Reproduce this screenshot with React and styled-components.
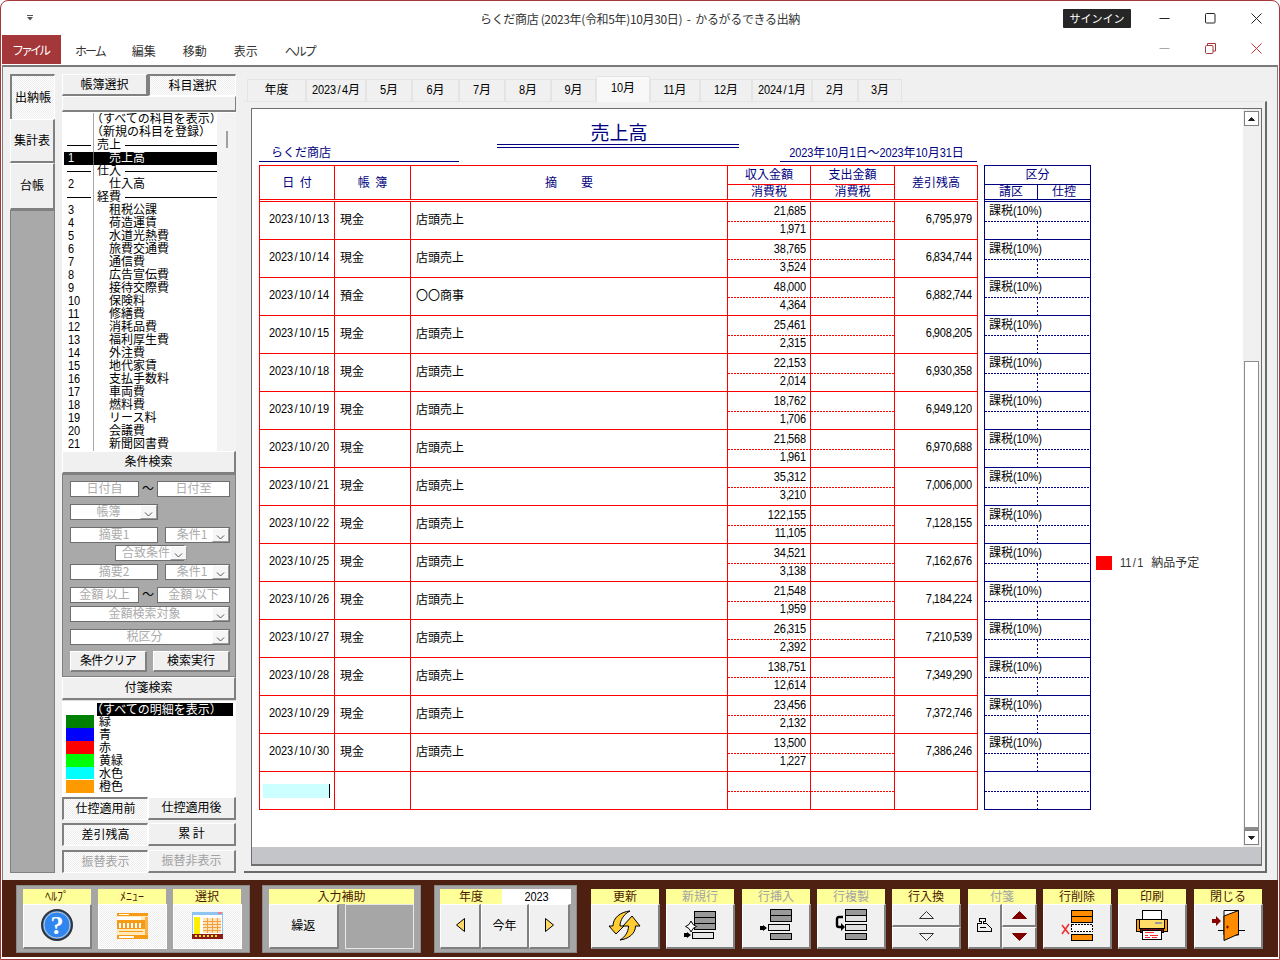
import React from "react";
import styled, { createGlobalStyle, css } from "styled-components";

const JP = '"Noto Sans CJK JP", "Liberation Sans", sans-serif';
const RED = "#ff0000";
const NAVY = "#000080";
const GREY = "#808080";

const Global = createGlobalStyle`
  html, body { margin: 0; padding: 0; background: #fff; }
  body { font: 12px/14px ${JP}; color: #000; }
  * { box-sizing: border-box; }
`;

const raised = css`
  background: #f0f0f0;
  border-style: solid;
  border-width: 1px 2px 2px 1px;
  border-color: #fff ${GREY} ${GREY} #fff;
`;
const sunken = css`
  background: repeating-conic-gradient(#fff 0 25%, #ececec 0 50%) 0 0 / 2px 2px;
  border-style: solid;
  border-width: 2px 1px 1px 2px;
  border-color: ${GREY} #fff #fff ${GREY};
`;

const Window = styled.div`
  width: 1280px; height: 960px; border: 1px solid #a4373a; border-radius: 8px 8px 0 0;
  padding: 0 1px 2px; display: flex; flex-direction: column; overflow: hidden; background: #fff;
`;
const TitleBar = styled.div`
  height: 34px; display: grid; grid-template-columns: 1fr auto 1fr; align-items: center; color: #333;
`;
const QuickMenu = styled.div`padding-left: 25px; display: flex; align-items: center;`;
const TitleText = styled.div`white-space: pre; padding-top: 2px; letter-spacing: -0.35px;`;
const WinControls = styled.div`display: flex; justify-content: flex-end; align-items: center; gap: 1px; margin-right: -1px;`;
const SignIn = styled.div`
  width: 68px; height: 19px; margin-right: 10px; background: #262626; color: #fff; font-size: 11px;
  display: flex; align-items: center; justify-content: center; border-radius: 1px;
`;
const CtlBox = styled.div`width: 45px; height: 20px; display: flex; align-items: center; justify-content: center;`;
const MenuBar = styled.div`height: 30px; display: flex; align-items: stretch;`;
const FileTab = styled.div`
  width: 59px; height: 29px; background: #a4373a; color: #fff; display: flex; align-items: center;
  justify-content: center; letter-spacing: -3px; padding-right: 3px;
`;
const MenuItems = styled.div`display: flex; gap: 27px; margin-left: 14px; padding-top: 9px; color: #333; flex: 1;`;
const MenuItem = styled.div`letter-spacing: ${p => p.$tight ? "-2px" : "0"};`;
const MenuCtl = styled.div`display: flex; gap: 1px; padding-bottom: 4px; align-items: center; margin-right: -1px;`;

const Body = styled.div`
  height: 815px; border-top: 2px solid #7a7a7a; border-left: 1px solid ${GREY}; border-right: 1px solid ${GREY};
  background: #f0f0f0; padding: 7px 0 7px 7px; display: grid;
  grid-template-columns: 45px 174px 1023px; column-gap: 7px;
`;
const SideTabs = styled.div`display: flex; flex-direction: column;`;
const SideTab = styled.div`
  height: ${p => p.$h}px; display: flex; align-items: center; justify-content: center; padding-bottom: 2px;
  ${p => p.$on ? sunken : raised}
  border-bottom-width: ${p => p.$on ? 0 : 2}px;
`;
const SideFill = styled.div`flex: 1; background: #a9a9a9; border: 1px solid ${GREY};`;

const Column = styled.div`display: flex; flex-direction: column; width: 174px;`;
const TwoBtns = styled.div`
  display: grid; grid-template-columns: 86px 88px; height: ${p => p.$h || 23}px;
  margin-top: ${p => p.$top || 0}px;
`;
const Btn = styled.div`
  display: flex; align-items: center; justify-content: center; padding-bottom: 2px;
  color: ${p => p.$off ? "#a0a0a0" : "#000"};
  letter-spacing: ${p => p.$tight ? "-0.8px" : "0"};
  ${p => p.$on ? sunken : raised}
`;
const EmptyBar = styled.div`height: 16px; ${raised} border-width: 1px 1px 2px 1px;`;
const ListBox = styled.div`
  height: 339px; background: #f3f3f3; display: flex; overflow: hidden;
  border-top: 1px solid #fff; border-left: 2px solid #fff;
`;
const ListInner = styled.div`width: 153px; background: #fff; height: 100%; overflow: hidden;`;
const ListRow = styled.div`
  height: 13px; display: grid; grid-template-columns: 29px 1px 1fr; align-items: center; line-height: 13px;
  white-space: nowrap;
  background: ${p => p.$sel ? "#000" : "transparent"}; color: ${p => p.$sel ? "#fff" : "#000"};
`;
const ListNo = styled.div`padding: 0 0 ${p => p.$digit ? 2 : 0}px 4px; display: flex; align-items: center;`;
const ListBar = styled.div`height: 13px; background: ${p => p.$sel ? "#666" : "#a8a8a8"};`;
const ListName = styled.div`
  padding-left: ${p => p.$indent ? 15 : 3}px; align-self: start; margin-top: -2px;
`;
const SecName = styled.div`display: flex; align-items: center; padding-left: 3px; gap: 4px;`;
const SecText = styled.span`margin-top: -4px;`;
const Rule = styled.div`flex: 1; height: 1px; background: #000; margin: ${p => p.$m || 0};`;
const ListTrack = styled.div`flex: 1; display: flex; justify-content: center; padding-top: 18px;`;
const ListThumb = styled.div`width: 2px; height: 17px; background: #a0a0a0;`;
const Halt = styled.span`font-feature-settings: "halt";`;
const SectionHead = styled.div`height: 23px; ${raised} display: flex; align-items: center; justify-content: center; padding-bottom: 2px;`;

const SearchPanel = styled.div`
  height: 203px; background: #a9a9a9; border: 1px solid ${GREY}; padding: 6px 0 0 7px;
  display: flex; flex-direction: column;
`;
const SearchRow = styled.div`
  display: flex; align-items: center; height: ${p => p.$h || 16}px; margin-top: ${p => p.$top || 0}px;
  margin-left: ${p => p.$left || 0}px; gap: ${p => p.$gap || 0}px;
`;
const Field = styled.div`
  width: ${p => p.$w}px; height: 16px; background: #fff; border: 1px solid #6e6e6e; color: #ababab;
  display: flex; align-items: center; justify-content: ${p => p.$right ? "space-between" : "center"};
  padding-left: ${p => p.$right ? 6 : 0}px; padding-bottom: ${p => p.$right ? 0 : 2}px; line-height: 12px; white-space: pre; flex: none;
`;
const FieldText = styled.span`flex: 1; text-align: center; margin-top: -2px;`;
const Drop = styled.div`
  width: 17px; height: 14px; background: #f6f6f6; border: 1px solid; border-color: #fff #9a9a9a #9a9a9a #fff; display: flex;
  align-items: flex-end; justify-content: center; padding-bottom: 1px; flex: none;
`;
const Tilde = styled.div`width: 18px; text-align: center; flex: none; margin-top: -2px;`;
const SearchBtn = styled(Btn)`width: 77px; height: 21px;`;

const StickyBox = styled.div`
  height: 97px; background: #fff; border-top: 1px solid #ddd; padding: 2px 3px 0 4px;
  display: grid; grid-template-columns: 28px 1fr; column-gap: 3px; grid-auto-rows: 13px;
`;
const Swatch = styled.div`background: ${p => p.$c}; margin: -1px 0 ${p => p.$gap ? 2 : 1}px;`;
const StickyName = styled.div`
  line-height: 13px; padding-left: ${p => p.$sel ? 0 : 2}px; white-space: nowrap;
  margin-top: ${p => p.$sel ? 0 : -2}px; height: 13px;
  background: ${p => p.$sel ? "#000" : "transparent"}; color: ${p => p.$sel ? "#fff" : "#000"};
`;
const StickyText = styled.span`display: block; margin-top: -1px;`;

const Main = styled.div`display: flex; flex-direction: column; padding-top: 1px; width: 1023px; margin-left: 1px;`;
const TabStrip = styled.div`display: flex; align-items: flex-end; height: 26px; padding-left: 3px;`;
const YearTab = styled.div`
  width: ${p => p.$w}px; height: ${p => p.$on ? 26 : 22}px; margin-bottom: ${p => p.$on ? -1 : 0}px;
  background: ${p => p.$on ? "#f8f8f8" : "#f0f0f0"}; border: 1px solid #e4e4e4;
  border-bottom-width: 0; display: flex; align-items: center; justify-content: center; z-index: 1;
  padding-bottom: ${p => p.$on ? 6 : 4}px;
`;
const Panel = styled.div`
  flex: 1; border-top: 1px solid #e6e6e6; border-right: 2px solid #6a6a6a; border-bottom: 2px solid #6a6a6a;
  padding: 6px 3px 5px 7px; display: flex;
`;
const Inner = styled.div`
  flex: 1; border: 1px solid #6e6e6e; border-width: 1px 1px 2px 1px; display: flex; flex-direction: column; background: #fff;
`;
const InnerTop = styled.div`flex: 1; display: flex; min-height: 0;`;
const GreyStrip = styled.div`height: 17px; background: #c4c5c9;`;
const Sheet = styled.div`flex: 1; padding-left: 7px; min-width: 0;`;
const Heading = styled.div`height: 56px; display: flex; align-items: flex-start; color: ${NAVY};`;
const ShopName = styled.div`
  width: 200px; height: 53px; display: flex; align-items: flex-end; padding: 0 0 2px 12px; border-bottom: 1px solid ${NAVY};
`;
const TitleBox = styled.div`
  width: 242px; margin-left: 38px; height: 39px; font-size: 19px; line-height: 22px; text-align: center;
  display: flex; align-items: flex-end; justify-content: center; padding-bottom: 1px; padding-left: 2px;
  border-bottom: 4px double ${NAVY};
`;
const DateBox = styled.div`
  width: 197px; margin-left: 41px; height: 53px; display: flex; align-items: flex-end; justify-content: center;
  padding: 0 4px 2px 0; border-bottom: 1px solid ${NAVY}; white-space: nowrap;
`;
const Tables = styled.div`display: flex; align-items: flex-start;`;
const Ledger = styled.div`width: 719px; border-left: 1px solid ${RED};`;
const cols = "75px 76px 317px 83px 84px 83px";
const HeadRow = styled.div`
  height: 37px; display: grid; grid-template-columns: ${cols}; border-top: 1px solid ${RED};
  border-bottom: 3px double ${RED}; color: ${NAVY};
`;
const HeadCell = styled.div`
  border-right: 1px solid ${RED}; display: flex; align-items: center; justify-content: center; white-space: pre; word-spacing: 3px;
  padding-bottom: 1px;
`;
const HeadSplit = styled.div`border-right: 1px solid ${RED}; display: grid; grid-template-rows: 19px 1fr;`;
const HeadTop = styled.div`
  border-bottom: 1px solid ${p => p.$c || RED}; display: flex; align-items: center; justify-content: center; padding-bottom: 3px;
`;
const HeadBot = styled.div`display: flex; align-items: center; justify-content: center; line-height: 12px; margin-top: -3px;`;
const DataRow = styled.div`
  height: 38px; display: grid; grid-template-columns: ${cols}; border-bottom: 1px solid ${RED};
`;
const Cell = styled.div`
  border-right: 1px solid ${RED}; display: flex; align-items: center; padding-left: ${p => p.$pl || 0}px;
  padding-bottom: ${p => p.$jp ? 4 : 3}px; white-space: nowrap;
  justify-content: ${p => p.$right ? "flex-end" : "flex-start"}; padding-right: ${p => p.$right ? 5 : 0}px;
`;
const AmtCell = styled.div`border-right: 1px solid ${RED}; display: grid; grid-template-rows: 20px 17px;`;
const dash = c => css`
  background-image: linear-gradient(to right, ${c} 2px, transparent 2px);
  background-size: 3px 1px; background-repeat: repeat-x; background-position: left bottom;
`;
const AmtTop = styled.div`
  ${dash(RED)} display: flex; align-items: center; justify-content: flex-end; padding: 0 4px 3px 0;
`;
const AmtBot = styled.div`display: flex; align-items: center; justify-content: flex-end; padding: 0 4px 3px 0;`;
const NumText = styled.span`
  display: inline-block; font-family: "Liberation Sans", sans-serif; font-size: 11px; line-height: 10px;
  letter-spacing: -0.1px; transform: scaleY(1.1); white-space: pre;
`;
const Comma = styled.span`letter-spacing: -1px;`;
const Slash = styled.span`margin: 0 1.5px;`;
const InputStub = styled.div`
  width: 67px; height: 14px; margin: 3px 0 0 3px; background: #ccffff; border-right: 1px solid #000;
`;
const Tax = styled.div`width: 107px; margin-left: 6px; border-left: 1px solid ${NAVY};`;
const TaxHead = styled.div`
  height: 37px; border-top: 1px solid ${NAVY}; border-bottom: 3px double ${NAVY}; border-right: 1px solid ${NAVY};
  display: grid; grid-template-rows: 19px 1fr; color: ${NAVY};
`;
const TaxSub = styled.div`display: grid; grid-template-columns: 53px 52px;`;
const TaxSubCell = styled.div`
  display: flex; align-items: center; justify-content: center; line-height: 12px; padding-bottom: 3px;
  border-right: ${p => p.$line ? `1px solid ${NAVY}` : "0"};
`;
const TaxRow = styled.div`
  height: 38px; border-bottom: 1px solid ${NAVY}; border-right: 1px solid ${NAVY};
  display: grid; grid-template-rows: 20px 17px;
`;
const TaxTop = styled.div`${dash(NAVY)} padding: 2px 0 0 4px; white-space: nowrap; line-height: 12px;`;
const TaxBot = styled.div`
  width: 53px; background-image: linear-gradient(to bottom, ${NAVY} 2px, transparent 2px);
  background-size: 1px 4px; background-repeat: repeat-y; background-position: right top;
`;
const Note = styled.div`
  margin: 390px 0 0 5px; display: flex; align-items: center; gap: 8px; height: 15px; color: #333; white-space: nowrap;
`;
const NoteMark = styled.div`width: 16px; height: 14px; background: #ff0000;`;
const NoteLine = styled.span`padding-bottom: 2px;`;
const NoteText = styled.span`margin-left: 8px;`;
const Scroll = styled.div`width: 18px; background: #f0f0f0; padding: 2px 2px 2px 1px; display: flex; flex-direction: column;`;
const ScrollBtn = styled.div`
  height: 15px; background: #fff; border: 1px solid ${GREY}; display: flex; align-items: center; justify-content: center;
`;
const ScrollGap = styled.div`height: 235px; flex: none;`;
const ScrollThumb = styled.div`flex: 1; background: #fff; border: 1px solid #8c8c8c; border-bottom-width: 3px;`;

const Dock = styled.div`
  height: 77px; background: #4e2012; padding: 5px 0 0 14px; display: flex; align-items: flex-start;
  color: #4a1a00;
`;
const Group = styled.div`
  height: 68px; width: ${p => p.$w}px; margin-right: ${p => p.$mr}px; background: #a6a6a6; padding: 3px ${p => p.$px || 6}px 0;
  display: flex; gap: ${p => p.$gap || 0}px; flex: none; border: 1px solid #8a8a8a;
`;
const Tool = styled.div`
  width: 69px; margin-right: ${p => p.$mr || 0}px; margin-top: ${p => p.$loose ? 4 : 0}px; flex: none;
  display: flex; flex-direction: column;
`;
const ToolLabel = styled.div`
  height: 15px; background: #ffff99; color: ${p => p.$off ? "#a3a3a3" : "#4a1a00"}; text-align: center;
  line-height: 13px; margin-right: 1px; white-space: nowrap;
`;
const ToolFace = styled.div`
  height: 45px; display: flex; align-items: center; justify-content: center; color: #000; padding-bottom: 2px;
  ${p => p.$on ? css`
    background: repeating-conic-gradient(#fff 0 25%, #ececec 0 50%) 0 0 / 2px 2px;
    border: 1px solid #fff;
  ` : raised}
`;
const ToolEmpty = styled.div`height: 45px; background: #a6a6a6; border: 1px solid #e8e8e8;`;
const WideGroupHead = styled.div`height: 15px; background: #ffff99; text-align: center; line-height: 13px;`;
const GroupCol = styled.div`display: flex; flex-direction: column; flex: 1;`;
const FacePair = styled.div`display: grid; grid-template-columns: 1fr 1fr; column-gap: 6px;`;
const YearHead = styled.div`display: grid; grid-template-columns: 62px 1fr; height: 15px;`;
const YearName = styled.div`background: #ffff99; text-align: center; line-height: 13px;`;
const YearValue = styled.div`background: #fff; text-align: center; line-height: 14px; color: #000;`;
const YearBtns = styled.div`display: grid; grid-template-columns: 41px 48px 41px;`;
const Stack = styled.div`display: grid; height: 45px; grid-template-rows: 1fr 1fr;`;
const SplitFace = styled.div`display: grid; height: 45px; grid-template-columns: 34px 35px;`;
const SmallFace = styled(ToolFace)`height: auto; padding-bottom: 0;`;

/* digits in the look of the reference: narrow commas, wider slashes */
const Num = ({ children }) => (
  <NumText>
    {String(children).split(/([,/])/).map((part, i) => {
      if (part === ",") return <Comma key={i}>,</Comma>;
      if (part === "/") return <Slash key={i}>/</Slash>;
      return <React.Fragment key={i}>{part}</React.Fragment>;
    })}
  </NumText>
);

/* ---- drawings ---- */
const Chevron = () => (
  <svg width="9" height="5" viewBox="0 0 9 5"><path d="M1 0.5 L4.5 4 L8 0.5" fill="none" stroke="#555" /></svg>
);
const HelpIcon = () => (
  <svg width="32" height="32" viewBox="0 0 32 32">
    <circle cx="16" cy="16" r="15" fill="#2f86f0" stroke="#333" strokeWidth="2" />
    <circle cx="16" cy="16" r="13" fill="none" stroke="#c8c8c8" strokeWidth="1" />
    <text x="16" y="25" textAnchor="middle" fontFamily="Liberation Serif, serif" fontWeight="700" fontSize="26" fill="#fff">?</text>
  </svg>
);
const MenuIcon = () => (
  <svg width="32" height="26" viewBox="0 0 32 26" shapeRendering="crispEdges">
    <rect x="0" y="0" width="31" height="26" fill="#ffe9b8" />
    <rect x="0" y="0" width="31" height="3" fill="#f79a16" />
    <rect x="2" y="1" width="10" height="1" fill="#fff" />
    <rect x="0" y="4" width="24" height="3" fill="#fff" />
    <rect x="0" y="7" width="28" height="9" fill="#f79a16" />
    <rect x="2" y="10" width="2" height="5" fill="#fff" /><rect x="6" y="10" width="2" height="5" fill="#fff" />
    <rect x="10" y="10" width="2" height="5" fill="#fff" /><rect x="14" y="10" width="2" height="5" fill="#fff" />
    <rect x="18" y="10" width="2" height="5" fill="#fff" /><rect x="22" y="10" width="2" height="5" fill="#fff" />
    <rect x="0" y="16" width="28" height="5" fill="#ffe9b8" /><rect x="2" y="18" width="24" height="1" fill="#f79a16" />
    <rect x="0" y="22" width="31" height="4" fill="#f79a16" /><rect x="2" y="23" width="15" height="2" fill="#fff" />
    <rect x="28" y="4" width="3" height="18" fill="#f7b24a" />
  </svg>
);
const SelectIcon = () => (
  <svg width="32" height="27" viewBox="0 0 32 27" shapeRendering="crispEdges">
    <rect x="0" y="0" width="31" height="27" fill="#8fc4f0" />
    <rect x="26" y="0" width="4" height="2" fill="#f08080" />
    <rect x="1" y="3" width="29" height="19" fill="#fff" />
    <rect x="2" y="5" width="6" height="17" fill="#ffee00" />
    <rect x="11" y="6" width="18" height="15" fill="#ffe2b8" />
    <path d="M11 9h18M11 12h18M11 15h18M11 18h18M15 6v15M20 6v15M25 6v15" stroke="#f0a040" strokeWidth="1" fill="none" />
    <rect x="0" y="22" width="31" height="5" fill="#8b1a1a" />
    <path d="M3 24h2M7 24h2M11 24h2M15 24h2M19 24h2M23 24h2" stroke="#ffe600" strokeWidth="2" fill="none" />
  </svg>
);
const Tri = ({ dir, fill, stroke, w = 9, h = 14 }) => {
  const d = {
    l: `M${w - 0.5} 0.5 V${h - 0.5} L0.5 ${h / 2} Z`,
    r: `M0.5 0.5 V${h - 0.5} L${w - 0.5} ${h / 2} Z`,
    u: `M0.5 ${h - 0.5} H${w - 0.5} L${w / 2} 0.5 Z`,
    d: `M0.5 0.5 H${w - 0.5} L${w / 2} ${h - 0.5} Z`,
  }[dir];
  return <svg width={w} height={h} viewBox={`0 0 ${w} ${h}`}><path d={d} fill={fill} stroke={stroke} /></svg>;
};
const RefreshIcon = () => (
  <svg width="34" height="31" viewBox="0 0 34 31">
    <path d="M1 16 H5 C5 8 12 2 22 1 C16 4 12 10 12 16 H16 L8 24 Z" fill="#ffcc33" stroke="#000" strokeLinejoin="round" />
    <path d="M15 16 L24 6 L32 16 H27.5 C27.5 24 20 29 12 30 C17 27 20.5 22 20.5 16 Z" fill="#ffcc33" stroke="#000" strokeLinejoin="round" />
  </svg>
);
const Bar = ({ x, y, w = 21, h = 6, fill }) => <rect x={x + 0.5} y={y + 0.5} width={w} height={h} fill={fill} stroke="#000" />;
const NewRowIcon = () => (
  <svg width="33" height="29" viewBox="0 0 33 29" shapeRendering="crispEdges">
    <Bar x={10} y={0} fill="#999" /><Bar x={10} y={6} fill="#999" /><Bar x={10} y={12} fill="#999" />
    <Bar x={8} y={21} fill="#e6e6e6" />
    <path d="M7 10 L9 13.5 L12.5 15.5 L9 17.5 L7 21 L5 17.5 L1.5 15.5 L5 13.5 Z" fill="#fff" stroke="#000" shapeRendering="auto" />
    <path d="M0 22 h3 v-1 l4 3 l-4 3 v-1 h-3 z" fill="#000" shapeRendering="auto" />
  </svg>
);
const InsertIcon = () => (
  <svg width="33" height="32" viewBox="0 0 33 32" shapeRendering="crispEdges">
    <Bar x={10} y={0} fill="#999" /><Bar x={10} y={6} fill="#999" />
    <Bar x={8} y={15} fill="#e6e6e6" /><Bar x={10} y={24} fill="#999" />
    <path d="M0 17 h3 v-1 l4 3 l-4 3 v-1 h-3 z" fill="#000" shapeRendering="auto" />
  </svg>
);
const CopyIcon = () => (
  <svg width="33" height="32" viewBox="0 0 33 32" shapeRendering="crispEdges">
    <Bar x={10} y={0} fill="#999" /><Bar x={10} y={6} fill="#e0e0e0" />
    <Bar x={10} y={15} fill="#e0e0e0" /><Bar x={10} y={24} fill="#999" />
    <path d="M8 8 H4 Q2 8 2 10 V16 Q2 18 4 18 H6" fill="none" stroke="#000" strokeWidth="2.4" shapeRendering="auto" />
    <path d="M6 14 L10 18 L6 22 Z" fill="#000" shapeRendering="auto" />
  </svg>
);
const DeleteIcon = () => (
  <svg width="33" height="31" viewBox="0 0 33 31" shapeRendering="crispEdges">
    <Bar x={10} y={0} fill="#ff8c00" /><Bar x={10} y={6} fill="#ff8c00" />
    <rect x="10.5" y="14.5" width="21" height="7" fill="#fff" stroke="#000" strokeDasharray="2 1" />
    <Bar x={10} y={24} fill="#ff8c00" />
    <path d="M1 15 L8 24 M8 14 L1 24" stroke="#f03030" strokeWidth="1.6" shapeRendering="auto" />
  </svg>
);
const PrintIcon = () => (
  <svg width="32" height="30" viewBox="0 0 32 30" shapeRendering="crispEdges">
    <rect x="6.5" y="0.5" width="19" height="10" fill="#fff" stroke="#000" />
    <rect x="0.5" y="9.5" width="4" height="12" fill="#ff9900" stroke="#000" />
    <rect x="27.5" y="9.5" width="4" height="12" fill="#ff9900" stroke="#000" />
    <rect x="3.5" y="9.5" width="25" height="9" fill="#ffdd66" stroke="#000" />
    <rect x="19" y="12" width="7" height="2" fill="#999" />
    <rect x="4.5" y="18.5" width="23" height="4" fill="#7a1010" stroke="#000" />
    <rect x="6.5" y="20.5" width="19" height="9" fill="#fff" stroke="#000" />
    <path d="M9 22.5h9M9 25h3M14 25h8M9 27h5M16 27h5" stroke="#f03030" fill="none" />
  </svg>
);
const CloseDoorIcon = () => (
  <svg width="33" height="31" viewBox="0 0 33 31">
    <path d="M12 0.5 H26.5 V25 H12 Z" fill="#fff" stroke="#000" />
    <path d="M12 6 L26.5 0.5 V24 L12 30.5 Z" fill="#ff8c00" stroke="#000" strokeLinejoin="round" />
    <path d="M14 17 h3 M15.5 15.5 v3" stroke="#8b0000" />
    <path d="M6 20.5 H12 M26 20.5 H33" stroke="#000" />
    <path d="M0 9 h4 v-3 l5 5 l-5 5 v-3 h-4 z" fill="#8b0000" />
  </svg>
);
const StampIcon = () => (
  <svg width="16" height="14" viewBox="0 0 16 14" shapeRendering="crispEdges">
    <path d="M0.5 13.5 V5.5 H4.5 V3.5 H2.5 V0.5 H8.5 V3.5 H6.5 V5.5 H9.5 L10.5 6.5 L11.5 7.5 L12.5 8.5 L13.5 9.5 L14.5 10.5 V13.5 Z" fill="#efefef" stroke="#000" />
    <path d="M3 9.5 H9" stroke="#000" />
  </svg>
);
const CtlIcon = ({ kind, c }) => (
  <svg width="11" height="11" viewBox="0 0 11 11" fill="none" stroke={c}>
    {kind === "min" && <path d="M0.5 5.5 H10.5" />}
    {kind === "max" && <rect x="0.5" y="0.5" width="9.5" height="9.5" rx="1" />}
    {kind === "close" && <path d="M0.5 0.5 L10.5 10.5 M10.5 0.5 L0.5 10.5" />}
    {kind === "restore" && (<><rect x="0.5" y="2.5" width="7.5" height="8" rx="1" /><path d="M2.5 2.5 V0.5 H10.5 V8 H8" /></>)}
  </svg>
);
const QuickIcon = () => (
  <svg width="7" height="6" viewBox="0 0 7 6"><path d="M0 0.5 H6" stroke="#555" /><path d="M0 2 H6 L3 5.5 Z" fill="#555" /></svg>
);

/* ---- data ---- */
const months = [
  ["年度", 59], [<><Num>2023/4</Num>月</>, 60], [<><Num>5</Num>月</>, 46], [<><Num>6</Num>月</>, 47], [<><Num>7</Num>月</>, 46],
  [<><Num>8</Num>月</>, 46], [<><Num>9</Num>月</>, 45], [<><Num>10</Num>月</>, 54, true], [<><Num>11</Num>月</>, 50], [<><Num>12</Num>月</>, 52],
  [<><Num>2024/1</Num>月</>, 60], [<><Num>2</Num>月</>, 46], [<><Num>3</Num>月</>, 44],
];
const accounts = ["租税公課","荷造運賃","水道光熱費","旅費交通費","通信費","広告宣伝費","接待交際費","保険料","修繕費","消耗品費","福利厚生費","外注費","地代家賃","支払手数料","車両費","燃料費","リース料","会議費","新聞図書費"];
const rows = [
  ["2023/10/13","現金","店頭売上","21,685","1,971","6,795,979"],
  ["2023/10/14","現金","店頭売上","38,765","3,524","6,834,744"],
  ["2023/10/14","預金","〇〇商事","48,000","4,364","6,882,744"],
  ["2023/10/15","現金","店頭売上","25,461","2,315","6,908,205"],
  ["2023/10/18","現金","店頭売上","22,153","2,014","6,930,358"],
  ["2023/10/19","現金","店頭売上","18,762","1,706","6,949,120"],
  ["2023/10/20","現金","店頭売上","21,568","1,961","6,970,688"],
  ["2023/10/21","現金","店頭売上","35,312","3,210","7,006,000"],
  ["2023/10/22","現金","店頭売上","122,155","11,105","7,128,155"],
  ["2023/10/25","現金","店頭売上","34,521","3,138","7,162,676"],
  ["2023/10/26","現金","店頭売上","21,548","1,959","7,184,224"],
  ["2023/10/27","現金","店頭売上","26,315","2,392","7,210,539"],
  ["2023/10/28","現金","店頭売上","138,751","12,614","7,349,290"],
  ["2023/10/29","現金","店頭売上","23,456","2,132","7,372,746"],
  ["2023/10/30","現金","店頭売上","13,500","1,227","7,386,246"],
];
const stickies = [["#008000","緑"],["#0000ff","青"],["#ff0000","赤"],["#00ff00","黄緑"],["#00ffff","水色",true],["#ff9900","橙色"]];

const Section = ({ name }) => (
  <ListRow>
    <ListNo><Rule $m="0 2px 0 -1px" /></ListNo>
    <ListBar />
    <SecName><SecText>{name}</SecText><Rule /></SecName>
  </ListRow>
);
const Account = ({ no, name, sel }) => (
  <ListRow $sel={sel}>
    <ListNo $digit><Num>{no}</Num></ListNo>
    <ListBar $sel={sel} />
    <ListName $indent>{name}</ListName>
  </ListRow>
);
const Dropdown = ({ w, label }) => (
  <Field $w={w} $right><FieldText>{label}</FieldText><Drop><Chevron /></Drop></Field>
);
const ToolBtn = ({ label, off, mr = 6, children }) => (
  <Tool $mr={mr} $loose>
    <ToolLabel $off={off}>{label}</ToolLabel>
    <ToolFace>{children}</ToolFace>
  </Tool>
);

export default function App() {
  return (
    <Window>
      <Global />
      <TitleBar>
        <QuickMenu><QuickIcon /></QuickMenu>
        <TitleText>らくだ商店 (2023年(令和5年)10月30日)  -  かるがるできる出納</TitleText>
        <WinControls>
          <SignIn>サインイン</SignIn>
          <CtlBox><CtlIcon kind="min" c="#222" /></CtlBox>
          <CtlBox><CtlIcon kind="max" c="#222" /></CtlBox>
          <CtlBox><CtlIcon kind="close" c="#222" /></CtlBox>
        </WinControls>
      </TitleBar>
      <MenuBar>
        <FileTab>ファイル</FileTab>
        <MenuItems>
          <MenuItem $tight>ホーム</MenuItem><MenuItem>編集</MenuItem><MenuItem>移動</MenuItem><MenuItem>表示</MenuItem><MenuItem $tight>ヘルプ</MenuItem>
        </MenuItems>
        <MenuCtl>
          <CtlBox><CtlIcon kind="min" c="#aaa" /></CtlBox>
          <CtlBox><CtlIcon kind="restore" c="#a4373a" /></CtlBox>
          <CtlBox><CtlIcon kind="close" c="#d13438" /></CtlBox>
        </MenuCtl>
      </MenuBar>
      <Body>
        <SideTabs>
          <SideTab $h={45} $on>出納帳</SideTab>
          <SideTab $h={44}>集計表</SideTab>
          <SideTab $h={47}>台帳</SideTab>
          <SideFill />
        </SideTabs>
        <Column>
          <TwoBtns $h={22}><Btn>帳簿選択</Btn><Btn $on>科目選択</Btn></TwoBtns>
          <EmptyBar />
          <ListBox>
            <ListInner>
              <ListRow><ListNo /><ListBar /><ListName><Halt>（</Halt>すべての科目を表示<Halt>）</Halt></ListName></ListRow>
              <ListRow><ListNo /><ListBar /><ListName><Halt>（</Halt>新規の科目を登録<Halt>）</Halt></ListName></ListRow>
              <Section name="売上" />
              <Account no="1" name="売上高" sel />
              <Section name="仕入" />
              <Account no="2" name="仕入高" />
              <Section name="経費" />
              {accounts.map((a, i) => <Account key={a} no={i + 3} name={a} />)}
            </ListInner>
            <ListTrack><ListThumb /></ListTrack>
          </ListBox>
          <SectionHead>条件検索</SectionHead>
          <SearchPanel>
            <SearchRow>
              <Field $w={69}>日付自</Field><Tilde>～</Tilde><Field $w={73}>日付至</Field>
            </SearchRow>
            <SearchRow $top={7}><Dropdown w={88} label="帳簿" /></SearchRow>
            <SearchRow $top={7} $gap={7}><Field $w={88}>摘要1</Field><Dropdown w={65} label="条件1" /></SearchRow>
            <SearchRow $top={2} $left={45}><Dropdown w={69} label="合致条件" /></SearchRow>
            <SearchRow $top={3} $gap={7}><Field $w={88}>摘要2</Field><Dropdown w={65} label="条件1" /></SearchRow>
            <SearchRow $top={7}>
              <Field $w={69}>金額 以上</Field><Tilde>～</Tilde><Field $w={73}>金額 以下</Field>
            </SearchRow>
            <SearchRow $top={3}><Dropdown w={160} label="金額検索対象" /></SearchRow>
            <SearchRow $top={7}><Dropdown w={160} label="税区分" /></SearchRow>
            <SearchRow $top={6} $h={21} $gap={6}><SearchBtn $tight>条件クリア</SearchBtn><SearchBtn>検索実行</SearchBtn></SearchRow>
          </SearchPanel>
          <SectionHead>付箋検索</SectionHead>
          <StickyBox>
            <div />
            <StickyName $sel><StickyText><Halt>（</Halt>すべての明細を表示<Halt>）</Halt></StickyText></StickyName>
            {stickies.map(([c, n, g]) => (
              <React.Fragment key={n}><Swatch $c={c} $gap={g} /><StickyName>{n}</StickyName></React.Fragment>
            ))}
          </StickyBox>
          <TwoBtns><Btn $on>仕控適用前</Btn><Btn>仕控適用後</Btn></TwoBtns>
          <TwoBtns $top={3}><Btn $on>差引残高</Btn><Btn>累 計</Btn></TwoBtns>
          <TwoBtns $top={4}><Btn $on $off>振替表示</Btn><Btn $off>振替非表示</Btn></TwoBtns>
        </Column>
        <Main>
          <TabStrip>
            {months.map(([t, w, on], i) => <YearTab key={i} $w={w} $on={on}><span>{t}</span></YearTab>)}
          </TabStrip>
          <Panel>
            <Inner>
              <InnerTop>
                <Sheet>
                  <Heading>
                    <ShopName>らくだ商店</ShopName>
                    <TitleBox>売上高</TitleBox>
                    <DateBox>
                      <span><Num>2023</Num>年<Num>10</Num>月<Num>1</Num>日～<Num>2023</Num>年<Num>10</Num>月<Num>31</Num>日</span>
                    </DateBox>
                  </Heading>
                  <Tables>
                    <Ledger>
                      <HeadRow>
                        <HeadCell>日 付</HeadCell>
                        <HeadCell>帳 簿</HeadCell>
                        <HeadCell>摘　　要</HeadCell>
                        <HeadSplit><HeadTop>収入金額</HeadTop><HeadBot>消費税</HeadBot></HeadSplit>
                        <HeadSplit><HeadTop>支出金額</HeadTop><HeadBot>消費税</HeadBot></HeadSplit>
                        <HeadCell>差引残高</HeadCell>
                      </HeadRow>
                      {rows.map((r, i) => (
                        <DataRow key={i}>
                          <Cell $pl={9}><Num>{r[0]}</Num></Cell>
                          <Cell $pl={5} $jp>{r[1]}</Cell>
                          <Cell $pl={5} $jp>{r[2]}</Cell>
                          <AmtCell><AmtTop><Num>{r[3]}</Num></AmtTop><AmtBot><Num>{r[4]}</Num></AmtBot></AmtCell>
                          <AmtCell><AmtTop /><AmtBot /></AmtCell>
                          <Cell $right><Num>{r[5]}</Num></Cell>
                        </DataRow>
                      ))}
                      <DataRow>
                        <Cell><InputStub /></Cell>
                        <Cell /><Cell />
                        <AmtCell><AmtTop /><AmtBot /></AmtCell>
                        <AmtCell><AmtTop /><AmtBot /></AmtCell>
                        <Cell />
                      </DataRow>
                    </Ledger>
                    <Tax>
                      <TaxHead>
                        <HeadTop $c={NAVY}>区分</HeadTop>
                        <TaxSub><TaxSubCell $line>請区</TaxSubCell><TaxSubCell>仕控</TaxSubCell></TaxSub>
                      </TaxHead>
                      {rows.map((r, i) => (
                        <TaxRow key={i}>
                          <TaxTop>課税<Num>(10%)</Num></TaxTop>
                          <TaxBot />
                        </TaxRow>
                      ))}
                      <TaxRow><TaxTop /><TaxBot /></TaxRow>
                    </Tax>
                    <Note><NoteMark /><NoteLine><Num>11/1</Num><NoteText>納品予定</NoteText></NoteLine></Note>
                  </Tables>
                </Sheet>
                <Scroll>
                  <ScrollBtn><Tri dir="u" fill="#222" stroke="#222" w={7} h={4} /></ScrollBtn>
                  <ScrollGap />
                  <ScrollThumb />
                  <ScrollBtn><Tri dir="d" fill="#222" stroke="#222" w={7} h={4} /></ScrollBtn>
                </Scroll>
              </InnerTop>
              <GreyStrip />
            </Inner>
          </Panel>
        </Main>
      </Body>
      <Dock>
        <Group $w={234} $mr={12} $gap={6}>
          <Tool><ToolLabel>ﾍﾙﾌﾟ</ToolLabel><ToolFace><HelpIcon /></ToolFace></Tool>
          <Tool><ToolLabel>ﾒﾆｭｰ</ToolLabel><ToolFace $on><MenuIcon /></ToolFace></Tool>
          <Tool><ToolLabel>選択</ToolLabel><ToolFace $on><SelectIcon /></ToolFace></Tool>
        </Group>
        <Group $w={159} $mr={13}>
          <GroupCol>
            <WideGroupHead>入力補助</WideGroupHead>
            <FacePair><ToolFace>繰返</ToolFace><ToolEmpty /></FacePair>
          </GroupCol>
        </Group>
        <Group $w={143} $mr={14} $px={5}>
          <GroupCol>
            <YearHead><YearName>年度</YearName><YearValue><Num>2023</Num></YearValue></YearHead>
            <YearBtns>
              <ToolFace><Tri dir="l" fill="#ffd966" stroke="#000" /></ToolFace>
              <ToolFace>今年</ToolFace>
              <ToolFace><Tri dir="r" fill="#ffd966" stroke="#000" /></ToolFace>
            </YearBtns>
          </GroupCol>
        </Group>
        <ToolBtn label="更新"><RefreshIcon /></ToolBtn>
        <ToolBtn label="新規行" off mr={7}><NewRowIcon /></ToolBtn>
        <ToolBtn label="行挿入" off><InsertIcon /></ToolBtn>
        <ToolBtn label="行複製" off><CopyIcon /></ToolBtn>
        <Tool $mr={7} $loose>
          <ToolLabel>行入換</ToolLabel>
          <Stack>
            <SmallFace><Tri dir="u" fill="#f0f0f0" stroke="#333" w={15} h={8} /></SmallFace>
            <SmallFace><Tri dir="d" fill="#f0f0f0" stroke="#333" w={15} h={8} /></SmallFace>
          </Stack>
        </Tool>
        <Tool $mr={6} $loose>
          <ToolLabel $off>付箋</ToolLabel>
          <SplitFace>
            <ToolFace><StampIcon /></ToolFace>
            <Stack>
              <SmallFace><Tri dir="u" fill="#800000" stroke="#800000" w={15} h={8} /></SmallFace>
              <SmallFace><Tri dir="d" fill="#800000" stroke="#800000" w={15} h={8} /></SmallFace>
            </Stack>
          </SplitFace>
        </Tool>
        <ToolBtn label="行削除"><DeleteIcon /></ToolBtn>
        <ToolBtn label="印刷" mr={7}><PrintIcon /></ToolBtn>
        <ToolBtn label="閉じる" mr={0}><CloseDoorIcon /></ToolBtn>
      </Dock>
    </Window>
  );
}
